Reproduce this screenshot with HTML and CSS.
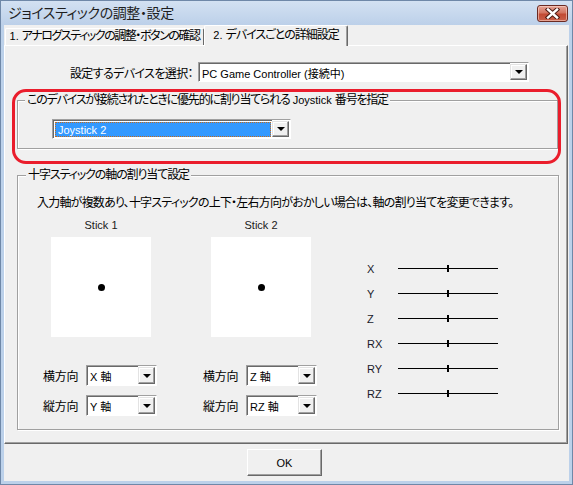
FILE: index.html
```html
<!DOCTYPE html>
<html lang="ja">
<head>
<meta charset="utf-8">
<title>ジョイスティックの調整・設定</title>
<link rel="stylesheet" href="styles.css">
</head>
<body>
<div class="window">
  <div class="titlebar">
    <span class="title">ジョイスティックの調整・設定</span>
    <div class="close">
      <svg width="15" height="11" viewBox="0 0 15 11">
        <path d="M3 1.5 L12 9.5 M12 1.5 L3 9.5" stroke="#4a1a12" stroke-width="4.4" stroke-linecap="square" fill="none"/>
        <path d="M3 1.5 L12 9.5 M12 1.5 L3 9.5" stroke="#ffffff" stroke-width="2.4" stroke-linecap="square" fill="none"/>
      </svg>
    </div>
  </div>
  <div class="client">
    <div class="tabs">
      <div class="tab"><span class="latin">1. </span>アナログスティックの調整・ボタンの確認</div>
      <div class="tab active"><span class="latin">2. </span>デバイスごとの詳細設定</div>
    </div>
    <div class="panel">
      <div class="device-row">
        <span class="device-label">設定するデバイスを選択：</span>
        <div class="combo device-combo">
          <div class="combo-field"><span class="combo-text">PC Game Controller (接続中)</span></div>
          <div class="combo-btn"><span class="tri"></span></div>
        </div>
      </div>

      <div class="group group-joy">
        <div class="legend">このデバイスが接続されたときに優先的に割り当てられる<span class="latin"> Joystick </span>番号を指定</div>
        <div class="combo joy-combo">
          <div class="combo-field"><span class="combo-text selected">Joystick 2</span></div>
          <div class="combo-btn"><span class="tri"></span></div>
        </div>
      </div>
      <div class="annotation"></div>

      <div class="group group-axes">
        <div class="legend">十字スティックの軸の割り当て設定</div>
        <p class="desc">入力軸が複数あり、十字スティックの上下・左右方向がおかしい場合は、軸の割り当てを変更できます。</p>
        <div class="axes">
          <div class="stick-col">
            <div class="stick-name">Stick 1</div>
            <div class="pad"><span class="dot"></span></div>
            <div class="assign-list">
              <div class="assign"><span class="assign-label">横方向</span>
                <div class="combo small-combo"><div class="combo-field"><span class="combo-text">X 軸</span></div><div class="combo-btn"><span class="tri"></span></div></div>
              </div>
              <div class="assign"><span class="assign-label">縦方向</span>
                <div class="combo small-combo"><div class="combo-field"><span class="combo-text">Y 軸</span></div><div class="combo-btn"><span class="tri"></span></div></div>
              </div>
            </div>
          </div>
          <div class="stick-col">
            <div class="stick-name">Stick 2</div>
            <div class="pad"><span class="dot"></span></div>
            <div class="assign-list">
              <div class="assign"><span class="assign-label">横方向</span>
                <div class="combo small-combo"><div class="combo-field"><span class="combo-text">Z 軸</span></div><div class="combo-btn"><span class="tri"></span></div></div>
              </div>
              <div class="assign"><span class="assign-label">縦方向</span>
                <div class="combo small-combo"><div class="combo-field"><span class="combo-text">RZ 軸</span></div><div class="combo-btn"><span class="tri"></span></div></div>
              </div>
            </div>
          </div>
          <div class="sliders">
            <div class="slider-row"><span class="axis-name">X</span><div class="track"><span class="thumb"></span></div></div>
            <div class="slider-row"><span class="axis-name">Y</span><div class="track"><span class="thumb"></span></div></div>
            <div class="slider-row"><span class="axis-name">Z</span><div class="track"><span class="thumb"></span></div></div>
            <div class="slider-row"><span class="axis-name">RX</span><div class="track"><span class="thumb"></span></div></div>
            <div class="slider-row"><span class="axis-name">RY</span><div class="track"><span class="thumb"></span></div></div>
            <div class="slider-row"><span class="axis-name">RZ</span><div class="track"><span class="thumb"></span></div></div>
          </div>
        </div>
      </div>
    </div>
    <div class="footer">
      <button class="ok" type="button">OK</button>
    </div>
  </div>
</div>
</body>
</html>
```
FILE: styles.css
```css
* { box-sizing: border-box; }
html, body { margin: 0; padding: 0; background: #bcd1ea; }
body {
  font-family: "Liberation Sans", "Noto Sans CJK JP", sans-serif;
  font-size: 12px;
  color: #000;
  font-feature-settings: "palt";
}
.latin { letter-spacing: 0; font-size: 11px; }
.window {
  width: 573px;
  height: 485px;
  border: 1px solid #6f88a8;
  background: #bcd1ea;
  display: flex;
  flex-direction: column;
}
.titlebar {
  height: 24px;
  flex: none;
  display: flex;
  align-items: flex-start;
  justify-content: space-between;
  background: linear-gradient(#d3e1f2, #bcd0e9);
}
.title {
  font-size: 14px;
  line-height: 24px;
  padding-left: 7px;
  color: #1e1e1e;
  letter-spacing: -0.4px;
}
.close {
  width: 31px;
  height: 17px;
  margin-top: 4px;
  margin-right: 4px;
  border: 1px solid #6b2a22;
  border-radius: 3px;
  background: linear-gradient(#e5a395 0%, #d37561 45%, #c24a33 55%, #c9604a 100%);
  box-shadow: inset 0 0 0 1px rgba(255,220,210,0.55);
  display: flex;
  align-items: center;
  justify-content: center;
}
.close svg { display: block; }
.client {
  flex: 1;
  margin: 0 3px 3px 3px;
  background: #f0f0f0;
  display: flex;
  flex-direction: column;
}
.tabs {
  height: 20px;
  flex: none;
  display: flex;
  align-items: flex-end;
  padding-left: 1px;
}
.tab {
  height: 17px;
  width: 199px;
  border: 1px solid;
  border-color: #ffffff #696969 transparent #ffffff;
  border-bottom: none;
  border-radius: 2px 2px 0 0;
  line-height: 15px;
  text-align: center;
  letter-spacing: -1.45px;
  white-space: nowrap;
}
.tab.active {
  height: 21px;
  width: 144px;
  margin-bottom: -1px;
  margin-left: 0;
  position: relative;
  z-index: 1;
  background: #f0f0f0;
  line-height: 18px;
  box-shadow: inset -1px 0 0 #a0a0a0;
  letter-spacing: -1px;
}
.panel {
  height: 399px;
  flex: none;
  margin-right: 1px;
  border: 1px solid;
  border-color: #ffffff #696969 #696969 #ffffff;
  box-shadow: inset -1px -1px 0 #a0a0a0;
  position: relative;
}
.device-row {
  margin-top: 16px;
  display: flex;
  align-items: center;
  height: 20px;
}
.device-label {
  width: 188px;
  text-align: right;
  margin-right: 5px;
  letter-spacing: -0.6px;
}

/* combo boxes */
.combo {
  display: flex;
  border: 1px solid;
  border-color: #a0a0a0 #ffffff #ffffff #a0a0a0;
  background: #fff;
}
.combo-field {
  flex: 1;
  display: flex;
  align-items: center;
  border: 1px solid;
  border-color: #696969 transparent transparent #696969;
  border-right: none;
  border-bottom: none;
  background: #fff;
  padding-left: 1px;
  min-width: 0;
}
.combo-text {
  font-size: 11px;
  white-space: nowrap;
  padding-left: 1px;
}
.combo-btn {
  width: 17px;
  margin: 1px 1px 1px 0;
  border: 1px solid;
  border-color: #e3e3e3 #696969 #696969 #e3e3e3;
  box-shadow: inset -1px -1px 0 #a0a0a0, inset 1px 1px 0 #ffffff;
  background: #f0f0f0;
  display: flex;
  align-items: center;
  justify-content: center;
}
.tri {
  width: 0;
  height: 0;
  border-left: 4px solid transparent;
  border-right: 4px solid transparent;
  border-top: 4px solid #000;
}
.device-combo { width: 331px; height: 20px; }
.joy-combo { width: 239px; height: 20px; margin: 12px 0 0 34px; }
.joy-combo .combo-field { padding: 1px 1px 1px 1px; }
.combo-text.selected {
  flex: 1;
  height: 100%;
  background: #3399ff;
  color: #fff;
  border: 1px dotted #c56a1a;
  line-height: 14px;
  padding-left: 2px;
}
.small-combo { width: 71px; height: 21px; }

/* group boxes */
.group {
  border: 1px solid #a0a0a0;
  box-shadow: 1px 1px 0 #ffffff, inset 1px 1px 0 #ffffff;
  margin-left: 12px;
}
.legend {
  width: fit-content;
  height: 13px;
  line-height: 13px;
  margin-top: -7px;
  padding: 0 2px;
  background: #f0f0f0;
  white-space: nowrap;
  letter-spacing: -1.2px;
}
.group-joy {
  margin-top: 18px;
  width: 541px;
  height: 49px;
}
.group-joy .legend { margin-left: 7px; }
.annotation {
  position: absolute;
  left: 7px;
  top: 43px;
  width: 549px;
  height: 75px;
  border: 3px solid #ea1d2c;
  border-radius: 14px;
  pointer-events: none;
}
.group-axes {
  margin-top: 26px;
  width: 542px;
  height: 255px;
}
.group-axes .legend { margin-left: 8px; letter-spacing: -1.1px; }
.desc {
  margin: 14px 0 0 19px;
  line-height: 14px;
  letter-spacing: -0.78px;
  white-space: nowrap;
}
.axes {
  margin: 8px 0 0 25px;
  display: flex;
  align-items: flex-start;
}
.stick-col {
  width: 114px;
  display: flex;
  flex-direction: column;
}
.stick-col + .stick-col { margin-left: 46px; }
.stick-name {
  font-size: 11px;
  line-height: 14px;
  height: 14px;
  text-align: center;
  padding-left: 2px;
  color: #1a1a1a;
}
.pad {
  width: 100px;
  height: 100px;
  margin: 5px 0 0 8px;
  background: #fff;
  display: flex;
  align-items: center;
  justify-content: center;
}
.dot {
  width: 7px;
  height: 7px;
  border-radius: 50%;
  background: #000;
}
.assign-list {
  margin-top: 28px;
  display: flex;
  flex-direction: column;
  gap: 9px;
}
.assign {
  display: flex;
  align-items: center;
  height: 21px;
}
.assign-label {
  width: 43px;
  letter-spacing: -0.3px;
}
.sliders {
  margin: 38px 0 0 50px;
  display: flex;
  flex-direction: column;
}
.slider-row {
  height: 25px;
  display: flex;
  align-items: center;
}
.axis-name {
  width: 31px;
  font-size: 11px;
  color: #1a1a2a;
  padding-top: 1px;
}
.track {
  width: 100px;
  height: 1px;
  background: #000;
  display: flex;
  align-items: center;
  justify-content: center;
}
.thumb {
  width: 2px;
  height: 7px;
  background: #000;
  flex: none;
}
.footer {
  flex: 1;
  display: flex;
  align-items: flex-start;
}
.ok {
  margin: 5px 0 0 243px;
  width: 75px;
  height: 27px;
  border: 1px solid;
  border-color: #ffffff #696969 #696969 #ffffff;
  box-shadow: inset -1px -1px 0 #a0a0a0;
  background: #f0f0f0;
  font-family: "Liberation Sans", sans-serif;
  font-size: 11px;
  color: #000;
  padding: 0;
}
```
